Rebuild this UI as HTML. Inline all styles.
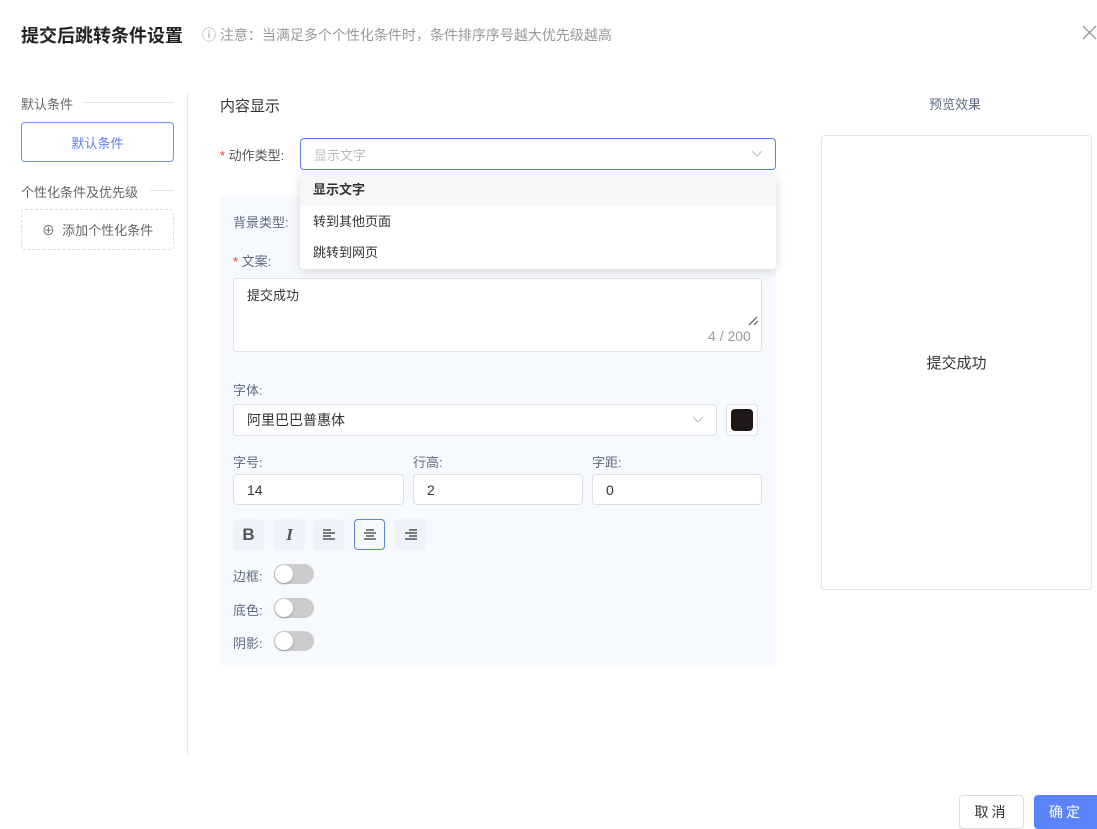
<!DOCTYPE html>
<html><head><meta charset="utf-8"><style>
*{box-sizing:border-box;margin:0;padding:0}
body{width:1097px;height:824px;background:#fff;position:relative;overflow:hidden;font-family:"Liberation Sans","Noto Sans CJK SC",sans-serif;font-size:13px;color:#333}
.a{position:absolute}
.lbl{color:#5d6b82;font-size:13px}
.inp{position:absolute;background:#fff;border:1px solid #dcdfe6;border-radius:4px;padding-left:13px;font-size:14px;color:#333;display:flex;align-items:center}
.tb{position:absolute;top:519px;width:31px;height:31px;background:#eef2fa;border-radius:4px;display:flex;align-items:center;justify-content:center;color:#555;font-weight:bold;font-size:17px}
.sw{position:absolute;left:274px;width:40px;height:20px;border-radius:10px;background:#ccc}
.sw::after{content:"";position:absolute;left:1px;top:1px;width:18px;height:18px;border-radius:50%;background:#fff;box-shadow:0 1px 2px rgba(0,0,0,.3)}
.chev{position:absolute;right:12px;top:50%;margin-top:-4px}
</style></head><body>
<div class="a" style="left:21px;top:22px;font-size:18px;font-weight:bold;color:#222">提交后跳转条件设置</div>
<div class="a" style="left:202px;top:25px;font-size:14px;color:#999">ⓘ 注意：当满足多个个性化条件时，条件排序序号越大优先级越高</div>
<svg class="a" style="left:1082px;top:25px" width="15" height="15"><path d="M1 1L14 14M14 1L1 14" stroke="#999" stroke-width="1.4"/></svg>

<div class="a" style="left:21px;top:94px;color:#666">默认条件</div>
<div class="a" style="left:83px;top:102px;width:91px;height:1px;background:#e5e5e5"></div>
<div class="a" style="left:21px;top:122px;width:153px;height:40px;border:1px solid #6f8ff5;border-radius:4px;color:#5b7ff5;display:flex;align-items:center;justify-content:center">默认条件</div>
<div class="a" style="left:21px;top:182px;color:#666">个性化条件及优先级</div>
<div class="a" style="left:150px;top:190px;width:24px;height:1px;background:#e5e5e5"></div>
<div class="a" style="left:21px;top:209px;width:153px;height:41px;border:1px dashed #ddd;border-radius:4px;color:#666;display:flex;align-items:center;justify-content:center">⊕&nbsp; 添加个性化条件</div>
<div class="a" style="left:187px;top:92px;width:1px;height:663px;background:#e8e8e8"></div>

<div class="a" style="left:220px;top:95px;font-size:15px;color:#333">内容显示</div>
<div class="a" style="left:220px;top:145px;color:#555"><span style="color:#e33">*</span> 动作类型:</div>
<div class="inp" style="left:300px;top:138px;width:476px;height:32px;border-color:#5b7ff5;color:#bbb;font-size:13px">显示文字<svg class="chev" width="12" height="8"><path d="M1 1L6 6L11 1" stroke="#bbb" fill="none"/></svg></div>

<div class="a" style="left:220px;top:196px;width:556px;height:469px;background:#f6f9fe"></div>
<div class="a lbl" style="left:233px;top:212px">背景类型:</div>
<div class="a lbl" style="left:233px;top:251px"><span style="color:#e33">*</span> 文案:</div>
<div class="a" style="left:233px;top:278px;width:529px;height:74px;background:#fff;border:1px solid #e0e0e0;border-radius:4px"></div>
<div class="a" style="left:247px;top:285px;font-size:13px;color:#333">提交成功</div>
<div class="a" style="left:708px;top:328px;font-size:14px;color:#999">4 / 200</div>
<svg class="a" style="left:748px;top:316px" width="12" height="10"><path d="M1 9L9 1M6 9L10 5" stroke="#555" stroke-width="1.2"/></svg>

<div class="a lbl" style="left:233px;top:380px">字体:</div>
<div class="inp" style="left:233px;top:404px;width:484px;height:32px">阿里巴巴普惠体<svg class="chev" width="12" height="8"><path d="M1 1L6 6L11 1" stroke="#bbb" fill="none"/></svg></div>
<div class="a" style="left:726px;top:404px;width:32px;height:32px;background:#fff;border:1px solid #e0e0e0;border-radius:4px"><div style="margin:4px;width:22px;height:22px;background:#1e1617;border-radius:4px"></div></div>

<div class="a lbl" style="left:233px;top:452px">字号:</div>
<div class="a lbl" style="left:413px;top:452px">行高:</div>
<div class="a lbl" style="left:592px;top:452px">字距:</div>
<div class="inp" style="left:233px;top:474px;width:171px;height:31px">14</div>
<div class="inp" style="left:413px;top:474px;width:170px;height:31px">2</div>
<div class="inp" style="left:592px;top:474px;width:170px;height:31px">0</div>

<div class="tb" style="left:233px">B</div>
<div class="tb" style="left:274px;font-style:italic;font-family:'Liberation Serif',serif">I</div>
<div class="tb" style="left:313px"><svg width="14" height="12"><path d="M1 1h8M1 4h12M1 7h8M1 10h12" stroke="#555" stroke-width="1.6"/></svg></div>
<div class="tb" style="left:354px;background:#f6f9fe;border:1px solid #5b7ff5"><svg width="14" height="12"><path d="M3 1h8M1 4h12M3 7h8M1 10h12" stroke="#555" stroke-width="1.6"/></svg></div>
<div class="tb" style="left:395px"><svg width="14" height="12"><path d="M5 1h8M1 4h12M5 7h8M1 10h12" stroke="#555" stroke-width="1.6"/></svg></div>

<div class="a lbl" style="left:233px;top:566px">边框:</div><div class="sw" style="top:564px"></div>
<div class="a lbl" style="left:233px;top:600px">底色:</div><div class="sw" style="top:598px"></div>
<div class="a lbl" style="left:233px;top:633px">阴影:</div><div class="sw" style="top:631px"></div>

<div class="a" style="left:300px;top:174px;width:476px;height:95px;background:#fff;border-radius:4px;box-shadow:0 2px 10px rgba(0,0,0,.15)">
<div style="height:32px;background:#f7f7f7;padding-left:13px;line-height:32px;font-weight:bold;color:#333">显示文字</div>
<div style="height:31px;padding-left:13px;line-height:31px;color:#333">转到其他页面</div>
<div style="height:31px;padding-left:13px;line-height:31px;color:#333">跳转到网页</div>
</div>

<div class="a" style="left:929px;top:94px;color:#5d6b82;font-size:13px">预览效果</div>
<div class="a" style="left:821px;top:135px;width:271px;height:455px;border:1px solid #e5e5e5;border-radius:4px;display:flex;align-items:center;justify-content:center;font-size:15px;color:#333">提交成功</div>

<div class="a" style="left:959px;top:795px;width:65px;height:34px;border:1px solid #ddd;border-radius:4px;display:flex;align-items:center;justify-content:center;font-size:14px;color:#333;letter-spacing:3px">取消</div>
<div class="a" style="left:1034px;top:795px;width:70px;height:34px;background:#5b84fb;border-radius:4px;display:flex;align-items:center;justify-content:center;font-size:14px;color:#fff;letter-spacing:3px;padding-right:6px">确定</div>
</body></html>
